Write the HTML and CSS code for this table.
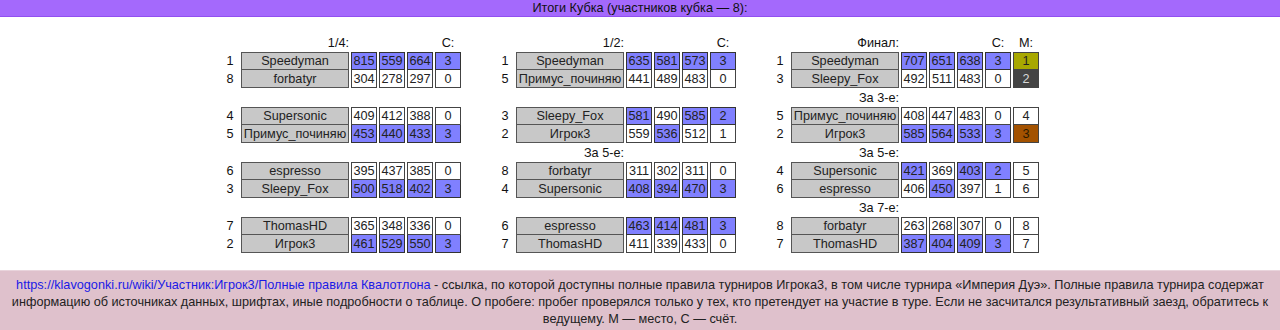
FILE: index.html
```html
<!DOCTYPE html>
<html lang="ru">
<head>
<meta charset="utf-8">
<title>Итоги Кубка</title>
<link rel="stylesheet" href="styles.css">
</head>
<body>
<div class="topbar">Итоги Кубка (участников кубка — 8):</div>

<div class="brackets">
  <!-- 1/4 -->
  <div class="col">
    <div class="lbl name-col">1/4:</div><div class="lbl score-col">С:</div>
    <div class="seed">1</div><div class="cell name">Speedyman</div><div class="cell b">815</div><div class="cell b">559</div><div class="cell b">664</div><div class="cell b">3</div>
    <div class="seed">8</div><div class="cell name low">forbatyr</div><div class="cell low">304</div><div class="cell low">278</div><div class="cell low">297</div><div class="cell low">0</div>
    <div class="gap"></div>
    <div class="seed">4</div><div class="cell name">Supersonic</div><div class="cell">409</div><div class="cell">412</div><div class="cell">388</div><div class="cell">0</div>
    <div class="seed">5</div><div class="cell name low">Примус_починяю</div><div class="cell low b">453</div><div class="cell low b">440</div><div class="cell low b">433</div><div class="cell low b">3</div>
    <div class="gap"></div>
    <div class="seed">6</div><div class="cell name">espresso</div><div class="cell">395</div><div class="cell">437</div><div class="cell">385</div><div class="cell">0</div>
    <div class="seed">3</div><div class="cell name low">Sleepy_Fox</div><div class="cell low b">500</div><div class="cell low b">518</div><div class="cell low b">402</div><div class="cell low b">3</div>
    <div class="gap"></div>
    <div class="seed">7</div><div class="cell name">ThomasHD</div><div class="cell">365</div><div class="cell">348</div><div class="cell">336</div><div class="cell">0</div>
    <div class="seed">2</div><div class="cell name low">Игрок3</div><div class="cell low b">461</div><div class="cell low b">529</div><div class="cell low b">550</div><div class="cell low b">3</div>
  </div>

  <!-- 1/2 -->
  <div class="col">
    <div class="lbl name-col">1/2:</div><div class="lbl score-col">С:</div>
    <div class="seed">1</div><div class="cell name">Speedyman</div><div class="cell b">635</div><div class="cell b">581</div><div class="cell b">573</div><div class="cell b">3</div>
    <div class="seed">5</div><div class="cell name low">Примус_починяю</div><div class="cell low">441</div><div class="cell low">489</div><div class="cell low">483</div><div class="cell low">0</div>
    <div class="gap"></div>
    <div class="seed">3</div><div class="cell name">Sleepy_Fox</div><div class="cell b">581</div><div class="cell">490</div><div class="cell b">585</div><div class="cell b">2</div>
    <div class="seed">2</div><div class="cell name low">Игрок3</div><div class="cell low">559</div><div class="cell low b">536</div><div class="cell low">512</div><div class="cell low">1</div>
    <div class="lbl name-col">За 5-е:</div>
    <div class="seed">8</div><div class="cell name">forbatyr</div><div class="cell">311</div><div class="cell">302</div><div class="cell">311</div><div class="cell">0</div>
    <div class="seed">4</div><div class="cell name low">Supersonic</div><div class="cell low b">408</div><div class="cell low b">394</div><div class="cell low b">470</div><div class="cell low b">3</div>
    <div class="gap"></div>
    <div class="seed">6</div><div class="cell name">espresso</div><div class="cell b">463</div><div class="cell b">414</div><div class="cell b">481</div><div class="cell b">3</div>
    <div class="seed">7</div><div class="cell name low">ThomasHD</div><div class="cell low">411</div><div class="cell low">339</div><div class="cell low">433</div><div class="cell low">0</div>
  </div>

  <!-- Final -->
  <div class="col final">
    <div class="lbl name-col">Финал:</div><div class="lbl score-col">С:</div><div class="lbl m-col">М:</div>
    <div class="seed">1</div><div class="cell name">Speedyman</div><div class="cell b">707</div><div class="cell b">651</div><div class="cell b">638</div><div class="cell b">3</div><div class="cell gold">1</div>
    <div class="seed">3</div><div class="cell name low">Sleepy_Fox</div><div class="cell low">492</div><div class="cell low">511</div><div class="cell low">483</div><div class="cell low">0</div><div class="cell low silver">2</div>
    <div class="lbl name-col">За 3-е:</div>
    <div class="seed">5</div><div class="cell name">Примус_починяю</div><div class="cell">408</div><div class="cell">447</div><div class="cell">483</div><div class="cell">0</div><div class="cell">4</div>
    <div class="seed">2</div><div class="cell name low">Игрок3</div><div class="cell low b">585</div><div class="cell low b">564</div><div class="cell low b">533</div><div class="cell low b">3</div><div class="cell low bronze">3</div>
    <div class="lbl name-col">За 5-е:</div>
    <div class="seed">4</div><div class="cell name">Supersonic</div><div class="cell b">421</div><div class="cell">369</div><div class="cell b">403</div><div class="cell b">2</div><div class="cell">5</div>
    <div class="seed">6</div><div class="cell name low">espresso</div><div class="cell low">406</div><div class="cell low b">450</div><div class="cell low">397</div><div class="cell low">1</div><div class="cell low">6</div>
    <div class="lbl name-col">За 7-е:</div>
    <div class="seed">8</div><div class="cell name">forbatyr</div><div class="cell">263</div><div class="cell">268</div><div class="cell">307</div><div class="cell">0</div><div class="cell">8</div>
    <div class="seed">7</div><div class="cell name low">ThomasHD</div><div class="cell low b">387</div><div class="cell low b">404</div><div class="cell low b">409</div><div class="cell low b">3</div><div class="cell low">7</div>
  </div>
</div>

<div class="footer">
  <a class="rules-link" href="#">https://klavogonki.ru/wiki/Участник:Игрок3/Полные правила Квалотлона</a> - ссылка, по которой доступны полные правила турниров Игрока3, в том числе турнира «Империя Дуэ». Полные правила турнира содержат информацию об источниках данных, шрифтах, иные подробности о таблице. О пробеге: пробег проверялся только у тех, кто претендует на участие в туре. Если не засчитался результативный заезд, обратитесь к ведущему. М — место, С — счёт.
</div>
</body>
</html>
```

FILE: styles.css
```css
* { box-sizing: border-box; }

html, body {
  margin: 0;
  padding: 0;
  background: #ffffff;
  font-family: "Liberation Sans", Arial, sans-serif;
  font-size: 12.7px;
  color: #000;
}

.topbar {
  height: 17px;
  line-height: 16px;
  background: #a469fc;
  border-bottom: 1px solid #9150f0;
  text-align: center;
  color: #111;
}

.brackets {
  display: flex;
  justify-content: center;
  gap: 35px;
  padding-right: 20px;
  margin-top: 17px;
}

.col {
  display: grid;
  grid-template-columns: 18px 108px 26px 26px 26px 26px;
  grid-template-rows: 18px 18px 18px 19px 18px 18px 19px 18px 18px 19px 18px 18px;
  column-gap: 2px;
}

.col.final {
  grid-template-columns: 18px 108px 26px 26px 26px 26px 26px;
}

.lbl {
  display: flex;
  align-items: center;
  line-height: 18px;
  color: #111;
}

.name-col {
  grid-column: 2 / 3;
  justify-content: flex-end;
}

.score-col {
  grid-column: 6 / 7;
  justify-content: center;
}

.m-col {
  grid-column: 7 / 8;
  justify-content: center;
}

.gap {
  grid-column: 1 / -1;
}

.seed {
  grid-column: 1 / 2;
  display: flex;
  align-items: center;
  justify-content: center;
  color: #111;
}

.cell {
  display: flex;
  align-items: center;
  justify-content: center;
  border: 1px solid #444;
  background: #ffffff;
  color: #222;
  white-space: nowrap;
}

.cell.low {
  border-top: 0;
}

.cell.name {
  background: #c8c8c8;
  border-color: #555;
}

.cell.b {
  background: #8080ff;
  border-color: #333;
}

.cell.gold {
  background: #a8a800;
  color: #222;
}

.cell.silver {
  background: #444444;
  color: #d8d8d8;
}

.cell.bronze {
  background: #a35200;
  color: #2a1a00;
}

.footer {
  margin-top: 17px;
  background: #dfc1cc;
  border-top: 1px solid #e9d4dc;
  padding: 6px 8px 8px;
  text-align: center;
  line-height: 17px;
  color: #222;
}

.rules-link {
  color: #1a1ae6;
  text-decoration: none;
}
```
